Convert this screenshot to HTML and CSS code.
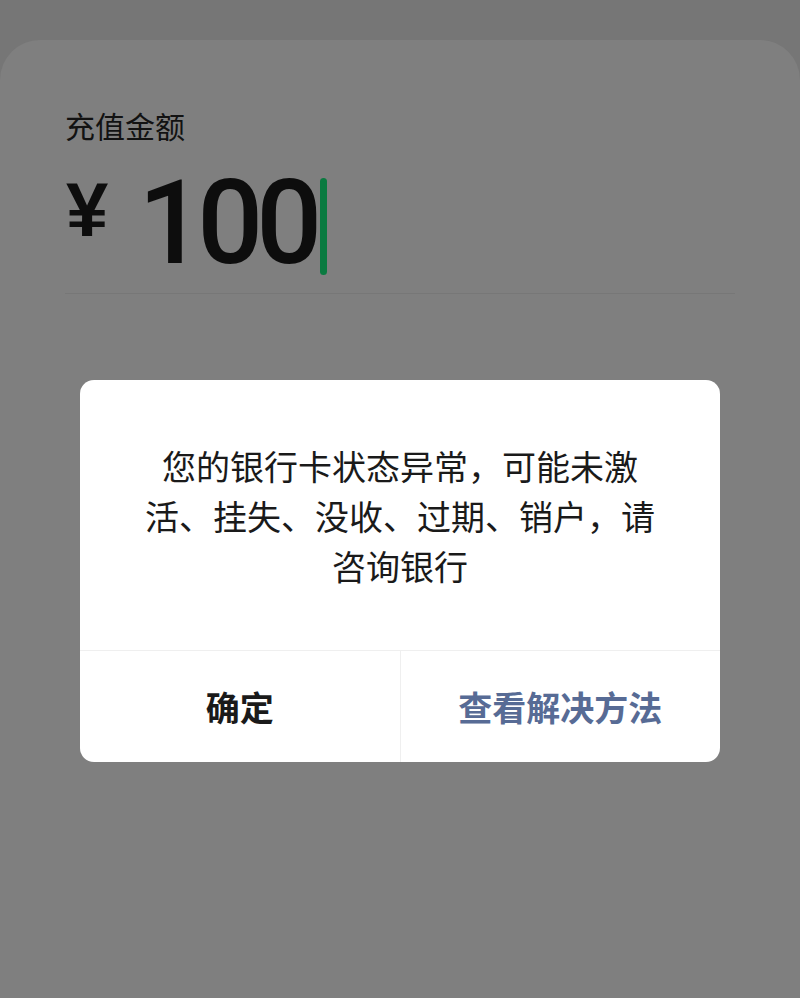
FILE: index.html
```html
<!DOCTYPE html>
<html>
    <head>
        <meta charset="UTF-8">
        <title>充值</title>
        <link rel="stylesheet" href="styles.css">
    </head>
    <body>
        <div class="sheet">
            <div class="label">充值金额</div>
            <div class="amount-row">
                <span class="currency">¥</span>
                <span class="amount">100</span>
                <span class="cursor"></span>
            </div>
        </div>

        <div class="dialog">
            <div class="dialog-body">您的银行卡状态异常，可能未激活、挂失、没收、过期、销户，请咨询银行</div>
            <div class="dialog-footer">
                <a class="dialog-btn">确定</a>
                <a class="dialog-btn link">查看解决方法</a>
            </div>
        </div>
    </body>
</html>
```

FILE: styles.css
```css
body {
    font-family: "Noto Sans CJK SC", "Noto Sans", sans-serif;
    background-color: #767676;
    margin: 0;
    padding: 40px 0 0 0;
    color: #111;
}
.sheet {
    background-color: #7f7f7f;
    border-radius: 40px 40px 0 0;
    min-height: 958px;
    padding: 70px 65px 0 65px;
    box-sizing: border-box;
}
.label {
    font-size: 30px;
    line-height: 30px;
    color: #121212;
}
.amount-row {
    display: flex;
    align-items: flex-start;
    margin-top: 25px;
    height: 128px;
    border-bottom: 1px solid #777;
}
.currency {
    font-family: "Liberation Sans", sans-serif;
    font-weight: bold;
    font-size: 76px;
    line-height: 76px;
    margin-top: 7px;
    margin-left: 1px;
    color: #0d0d0d;
}
.amount {
    font-family: Roboto, sans-serif;
    font-weight: 500;
    font-size: 116px;
    line-height: 116px;
    letter-spacing: -7px;
    margin-left: 30px;
    color: #0d0d0d;
}
.cursor {
    width: 7px;
    height: 97px;
    margin-top: 13px;
    margin-left: 5px;
    border-radius: 4px;
    background-color: #0a7a40;
}
.dialog {
    position: absolute;
    top: 380px;
    left: 80px;
    width: 640px;
    background-color: #fff;
    border-radius: 14px;
    overflow: hidden;
}
.dialog-body {
    padding: 61px 56px 59px 56px;
    font-size: 34px;
    line-height: 50px;
    text-align: center;
    color: #1a1a1a;
}
.dialog-footer {
    display: flex;
    border-top: 1px solid #efefef;
}
.dialog-btn {
    flex: 1;
    height: 111px;
    display: flex;
    align-items: center;
    justify-content: center;
    font-size: 34px;
    font-weight: bold;
    color: #1a1a1a;
}
.dialog-btn + .dialog-btn {
    border-left: 1px solid #efefef;
}
.dialog-btn.link {
    color: #576b95;
}
```
